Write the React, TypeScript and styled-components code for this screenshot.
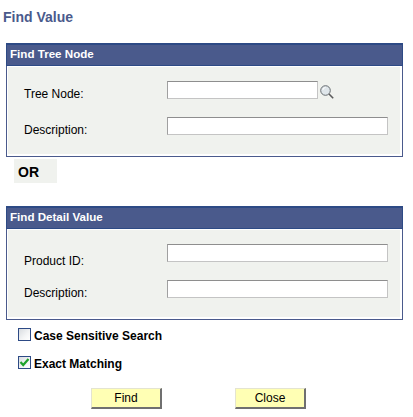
import styled, { createGlobalStyle } from "styled-components";

const GlobalStyle = createGlobalStyle`
  html, body {
    margin: 0;
    padding: 0;
    background: #ffffff;
  }
`;

const Page = styled.div`
  width: 413px;
  height: 417px;
  overflow: hidden;
  box-sizing: border-box;
  padding: 10px 10px 0 6px;
  font-family: "Liberation Sans", Arial, sans-serif;
  font-size: 12px;
  color: #000;
`;

const Title = styled.h1`
  margin: 0 0 19px -3px;
  height: 14px;
  font-size: 14px;
  line-height: 14px;
  font-weight: bold;
  color: #4a5a8c;
`;

const Panel = styled.section`
  box-sizing: border-box;
  width: 397px;
  height: 114px;
  border: 1px solid #4a5a8c;
  border-top: 0;
  display: flex;
  flex-direction: column;
`;

const PanelHeader = styled.h2`
  box-sizing: border-box;
  margin: 0 -1px;
  height: 23px;
  padding-left: 3px;
  background: #4a5a8c;
  border: 1px solid #2d4a85;
  border-top-width: 2px;
  color: #fff;
  font-size: 11.6px;
  line-height: 18px;
  font-weight: bold;
`;

const PanelBody = styled.div`
  flex: 1;
  margin: 1px 2px 2px 1px;
  background: #f0f2ee;
  display: flex;
  flex-direction: column;
`;

const FieldRow = styled.div<{ $top: number }>`
  display: flex;
  align-items: flex-start;
  margin-top: ${(p) => p.$top}px;
  height: 18px;
`;

const FieldLabel = styled.label<{ $drop: number }>`
  width: 143px;
  padding-left: 16px;
  line-height: 14px;
  margin-top: ${(p) => p.$drop}px;
  white-space: nowrap;
`;

const TextInput = styled.input<{ $width: number }>`
  box-sizing: border-box;
  flex: none;
  margin: 0;
  padding: 0 2px;
  width: ${(p) => p.$width}px;
  height: 18px;
  background: #fff;
  border: 1px solid #c4c4c4;
  border-top-color: #8e8e8e;
  border-left-color: #a0a0a0;
  border-radius: 0;
  outline: none;
`;

const LookupIcon = styled.svg`
  flex: none;
  margin: 4px 0 0 2px;
`;

const OrBox = styled.div`
  box-sizing: border-box;
  width: 43px;
  height: 24px;
  margin: 2px 0 23px 8px;
  padding: 2px 0 0 4px;
  background: #f0f2ee;
  font-size: 14px;
  line-height: 22px;
  font-weight: bold;
`;

const CheckRow = styled.label<{ $top: number }>`
  display: flex;
  align-items: flex-start;
  height: 16px;
  margin: ${(p) => p.$top}px 0 0 12px;
  font-weight: bold;
  line-height: 16px;
  white-space: nowrap;
`;

const CheckBox = styled.span`
  box-sizing: border-box;
  flex: none;
  width: 13px;
  height: 13px;
  margin-right: 3px;
  border: 1px solid #2d4a85;
  background: linear-gradient(135deg, #d8dce0 0%, #f4f5f6 60%, #ffffff 100%);
  display: flex;
  align-items: center;
  justify-content: center;
`;

const ButtonRow = styled.div`
  display: flex;
  margin: 16px 0 0 85px;
  gap: 73px;
`;

const Button = styled.button`
  box-sizing: border-box;
  width: 71px;
  height: 21px;
  margin: 0;
  padding: 0;
  background: #ffffb4;
  border: 1px solid;
  border-color: #e4e4d0 #707070 #707070 #e4e4d0;
  border-right-width: 2px;
  border-bottom-width: 2px;
  border-radius: 0;
  font-family: inherit;
  font-size: 12px;
  color: #000;
`;

function Magnifier() {
  return (
    <LookupIcon width="14" height="14" viewBox="0 0 14 14">
      <circle cx="5.5" cy="5.5" r="4.8" fill="#dfe6ea" stroke="#666c70" strokeWidth="1" />
      <path d="M2.8 5 A 3 3 0 0 1 5.5 2.5" fill="none" stroke="#fff" strokeWidth="1" />
      <path d="M9 9 L13.2 13.2" stroke="#5c5c5c" strokeWidth="1.6" />
    </LookupIcon>
  );
}

function Tick() {
  return (
    <svg width="11" height="11" viewBox="0 0 11 11">
      <path d="M1.5 5 L4.2 8 L9.5 2" fill="none" stroke="#1fa32c" strokeWidth="2.2" />
    </svg>
  );
}

export default function App() {
  return (
    <Page>
      <GlobalStyle />
      <Title>Find Value</Title>

      <Panel>
        <PanelHeader>Find Tree Node</PanelHeader>
        <PanelBody>
          <FieldRow $top={14}>
            <FieldLabel $drop={6}>Tree Node:</FieldLabel>
            <TextInput $width={151} />
            <Magnifier />
          </FieldRow>
          <FieldRow $top={18}>
            <FieldLabel $drop={6}>Description:</FieldLabel>
            <TextInput $width={221} />
          </FieldRow>
        </PanelBody>
      </Panel>

      <OrBox>OR</OrBox>

      <Panel>
        <PanelHeader>Find Detail Value</PanelHeader>
        <PanelBody>
          <FieldRow $top={14}>
            <FieldLabel $drop={10}>Product ID:</FieldLabel>
            <TextInput $width={221} />
          </FieldRow>
          <FieldRow $top={18}>
            <FieldLabel $drop={6}>Description:</FieldLabel>
            <TextInput $width={221} />
          </FieldRow>
        </PanelBody>
      </Panel>

      <CheckRow $top={8}>
        <CheckBox />
        Case Sensitive Search
      </CheckRow>
      <CheckRow $top={12}>
        <CheckBox>
          <Tick />
        </CheckBox>
        Exact Matching
      </CheckRow>

      <ButtonRow>
        <Button>Find</Button>
        <Button>Close</Button>
      </ButtonRow>
    </Page>
  );
}
